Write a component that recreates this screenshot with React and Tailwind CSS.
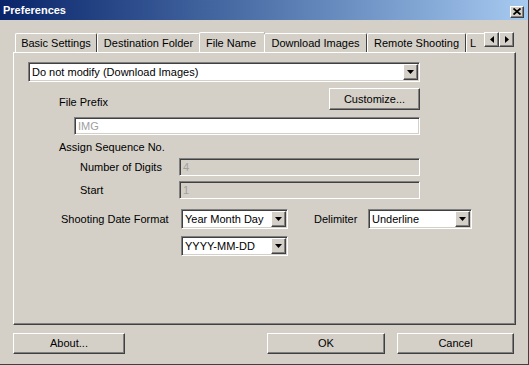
import React from "react";

const raised =
  "border border-t-white border-l-white border-b-[#404040] border-r-[#404040] shadow-[inset_-1px_-1px_0_#808080]";
const sunken =
  "border border-t-[#808080] border-l-[#808080] border-b-white border-r-white shadow-[inset_1px_1px_0_#404040,inset_-1px_-1px_0_#d4d0c8]";

const Arrow = ({ dir = "down" }) => {
  const pts = {
    down: "0,0 7,0 3.5,4",
    left: "4,0 4,7 0,3.5",
    right: "0,0 0,7 4,3.5",
  }[dir];
  const w = dir === "down" ? 7 : 4;
  const h = dir === "down" ? 4 : 7;
  return (
    <svg width={w} height={h} viewBox={`0 0 ${w} ${h}`}>
      <polygon points={pts} fill="#000" />
    </svg>
  );
};

const Combo = ({ value, className = "" }) => (
  <div className={`${sunken} bg-white h-[20px] flex items-center ${className}`}>
    <span className="flex-1 pl-[3px] truncate">{value}</span>
    <div className={`${raised} bg-[#d4d0c8] w-[15px] h-[16px] mr-px flex items-center justify-center`}>
      <Arrow />
    </div>
  </div>
);

const TextBox = ({ value, disabled, className = "" }) => (
  <div
    className={`${sunken} h-[18px] flex items-center pl-[3px] text-[#a0a0a0] ${
      disabled ? "bg-[#d4d0c8]" : "bg-white"
    } ${className}`}
  >
    {value}
  </div>
);

const Button = ({ children, className = "" }) => (
  <div className={`${raised} bg-[#d4d0c8] h-[21px] flex items-center justify-center ${className}`}>
    {children}
  </div>
);

const tabs = [
  { label: "Basic Settings", w: "w-[82px]" },
  { label: "Destination Folder", w: "w-[103px]" },
  { label: "File Name", w: "w-[66px]", active: true },
  { label: "Download Images", w: "w-[103px]" },
  { label: "Remote Shooting", w: "w-[99px]" },
  { label: "L", w: "w-[30px]", left: true },
];

export default function App() {
  return (
    <div className="w-[529px] h-[365px] bg-[#d4d0c8] flex flex-col border-r border-b border-r-[#404040] border-b-[#404040] text-[11px] text-black font-['Liberation_Sans',Arial,sans-serif] overflow-hidden">
      {/* Title bar */}
      <div className="h-[20px] bg-gradient-to-r from-[#0a246a] to-[#a6caf0] flex items-center justify-between pl-[3px] pr-[4px]">
        <span className="text-white font-bold text-[11px]">Preferences</span>
        <div className={`${raised} bg-[#d4d0c8] w-[14px] h-[12px] mt-[3px] flex items-center justify-center`}>
          <svg width="8" height="7" viewBox="0 0 8 7">
            <path d="M0.5 0.5 L7.5 6.5 M7.5 0.5 L0.5 6.5" stroke="#000" strokeWidth="1.8" />
          </svg>
        </div>
      </div>

      {/* Tabs */}
      <div className="mt-[10px] ml-[13px] h-[22px] flex items-end relative z-10">
        <div className="w-[471px] h-[22px] flex items-end overflow-hidden pl-[2px]">
          {tabs.map((t) => (
            <div
              key={t.label}
              className={`${t.w} shrink-0 border-t border-l border-r border-t-white border-l-white border-r-[#404040] rounded-t-[2px] bg-[#d4d0c8] flex items-center ${
                t.active
                  ? "h-[21px] -mb-px pl-[6px] -mx-px"
                  : t.left
                  ? "h-[19px] pl-[3px]"
                  : "h-[19px] justify-center"
              }`}
            >
              <span className="whitespace-nowrap">{t.label}</span>
            </div>
          ))}
        </div>
        <div className="flex self-start mt-[2px]">
          <div className={`${raised} bg-[#d4d0c8] w-[15px] h-[15px] flex items-center justify-center`}>
            <Arrow dir="left" />
          </div>
          <div className={`${raised} bg-[#d4d0c8] w-[15px] h-[15px] flex items-center justify-center`}>
            <Arrow dir="right" />
          </div>
        </div>
      </div>

      {/* Panel */}
      <div className="ml-[13px] w-[503px] h-[273px] border border-t-white border-l-white border-b-[#404040] border-r-[#404040] shadow-[inset_-1px_-1px_0_#808080] flex flex-col">
        <Combo value="Do not modify (Download Images)" className="mt-[9px] ml-[14px] w-[392px]" />

        <div className="mt-[6px] w-[406px] h-[22px] flex items-start justify-between">
          <span className="ml-[45px] mt-[8px] leading-[13px]">File Prefix</span>
          <Button className="w-[91px] h-[22px]">Customize...</Button>
        </div>

        <TextBox value="IMG" className="mt-[7px] ml-[60px] w-[346px]" />

        <span className="mt-[6px] ml-[45px] leading-[13px]">Assign Sequence No.</span>

        <div className="mt-[4px] flex items-center">
          <span className="ml-[66px] w-[99px] leading-[13px]">Number of Digits</span>
          <TextBox value="4" disabled className="w-[241px]" />
        </div>
        <div className="mt-[5px] flex items-center">
          <span className="ml-[66px] w-[99px] leading-[13px]">Start</span>
          <TextBox value="1" disabled className="w-[241px]" />
        </div>

        <div className="mt-[10px] flex items-center">
          <span className="ml-[47px] w-[120px] leading-[13px]">Shooting Date Format</span>
          <Combo value="Year Month Day" className="w-[107px]" />
          <span className="ml-[26px] w-[54px] leading-[13px]">Delimiter</span>
          <Combo value="Underline" className="w-[104px]" />
        </div>
        <Combo value="YYYY-MM-DD" className="mt-[7px] ml-[167px] w-[107px]" />
      </div>

      {/* Bottom buttons */}
      <div className="mt-[8px] flex">
        <Button className="ml-[13px] w-[112px]">About...</Button>
        <Button className="ml-[142px] w-[118px]">OK</Button>
        <Button className="ml-[12px] w-[117px]">Cancel</Button>
      </div>
    </div>
  );
}
